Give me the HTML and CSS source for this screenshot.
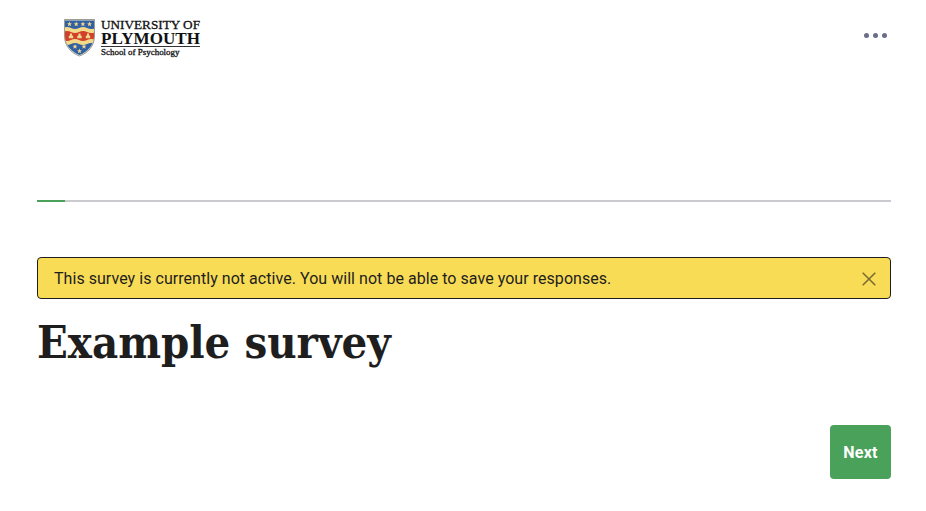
FILE: index.html
```html
<!DOCTYPE html>
<html lang="en">
<head>
<meta charset="utf-8">
<title>Example survey</title>
<link rel="stylesheet" href="styles.css">
</head>
<body>
<header class="topbar">
  <svg class="logo" width="138" height="40" viewBox="0 0 138 40" role="img" aria-label="University of Plymouth School of Psychology">
    <defs>
      <clipPath id="shield"><path d="M2 2.5H31V18C31 27 24.5 34 16.5 37C8.5 34 2 27 2 18Z"/></clipPath>
      <path id="star" d="M0-2.4L.7-.7L2.3-.7L1.1.5L1.6 2.2L0 1.2L-1.6 2.2L-1.1.5L-2.3-.7L-.7-.7Z"/>
      <path id="tower" d="M-1-2.4H1V-.8L2.2 0V2.2H-2.2V0L-1-.8Z"/>
    </defs>
    <path d="M1.5 1.5H31.5V18C31.5 28 25 35 16.5 38C8 35 1.5 28 1.5 18Z" fill="#e8e3cf" stroke="#858981" stroke-width=".8"/>
    <g clip-path="url(#shield)">
      <rect width="33" height="39" fill="#3260a2"/>
      <path d="M0 10Q4 8 8 10T16 10T24 10T33 10V26Q28 24 24 26T16 26T8 26T0 26Z" fill="#f3d98a"/>
      <path d="M0 14Q4 12 8 14T16 14T24 14T33 14V22Q28 20 24 22T16 22T8 22T0 22Z" fill="#d0402b"/>
      <g fill="#edd98c">
        <use href="#star" x="6.5" y="6"/><use href="#star" x="13.2" y="6"/><use href="#star" x="19.9" y="6"/><use href="#star" x="26.5" y="6"/>
        <use href="#tower" x="8" y="18"/><use href="#tower" x="16.5" y="18"/><use href="#tower" x="25" y="18"/>
        <use href="#star" x="12" y="28.5"/><use href="#star" x="21" y="28.5"/><use href="#star" x="16.5" y="33"/>
      </g>
    </g>
    <g class="logo-text">
      <text x="38" y="10.5" font-size="12.4" textLength="99" lengthAdjust="spacingAndGlyphs">UNIVERSITY OF</text>
      <text class="logo-strong" x="38" y="26" font-size="17.2" textLength="99" lengthAdjust="spacingAndGlyphs">PLYMOUTH</text>
      <text x="38" y="36.6" font-size="8.6" textLength="78.5" lengthAdjust="spacingAndGlyphs">School of Psychology</text>
    </g>
    <path d="M38 28.5H137" stroke="#333"/>
  </svg>
  <button class="menu" aria-label="Menu"><span></span><span></span><span></span></button>
</header>
<main>
  <div class="progress"><div class="bar"></div></div>
  <div class="alert">
    <span class="message">This survey is currently not active. You will not be able to save your responses.</span>
    <svg width="14" height="14" viewBox="0 0 14 14" aria-hidden="true"><path d="M.7.7L13.3 13.3M13.3.7L.7 13.3"/></svg>
  </div>
  <h1>Example survey</h1>
  <div class="actions"><button class="next">Next</button></div>
</main>
</body>
</html>
```
FILE: styles.css
```css
* { box-sizing: border-box; }
body { margin: 0; background: #fff; color: #1e1e1e; font-family: Roboto, sans-serif; }
.topbar { height: 70px; padding: 18px 39px 0 63px; display: flex; justify-content: space-between; align-items: flex-start; }
.logo { display: block; }
.logo-text { font-family: "Liberation Serif", serif; fill: #111; stroke: #111; stroke-width: .3px; }
.logo-strong { font-weight: bold; stroke-width: 0; }
.menu { display: flex; gap: 4px; padding: 0; margin-top: 14.5px; border: 0; background: none; }
.menu span { width: 5px; height: 5px; border-radius: 50%; background: #6a6e88; }
main { padding: 130px 35px 0 37px; }
.progress { height: 2px; background: #cbcbcf; }
.bar { width: 28px; height: 2px; background: #49a15a; }
.alert { height: 42px; margin-top: 55px; padding: 0 14px 0 16px; display: flex; align-items: center; justify-content: space-between; border: 1px solid #1e1e1e; border-radius: 4px; background: #f9dc56; font-size: 16px; }
.message { letter-spacing: .044px; white-space: nowrap; }
.alert svg { margin-top: 1px; }
.alert path { fill: none; stroke: #7b6e32; stroke-width: 1.6; }
h1 { margin: 15px 0 0; height: 57px; font: bold 45px/58px "DejaVu Serif Condensed", "DejaVu Serif", serif; letter-spacing: -.02px; white-space: nowrap; }
.actions { display: flex; justify-content: flex-end; margin-top: 54px; }
.next { width: 61px; height: 54px; padding: 0; border: 0; border-radius: 4px; background: #49a15a; color: #fff; font: bold 16px Roboto, sans-serif; letter-spacing: .2px; }
```
